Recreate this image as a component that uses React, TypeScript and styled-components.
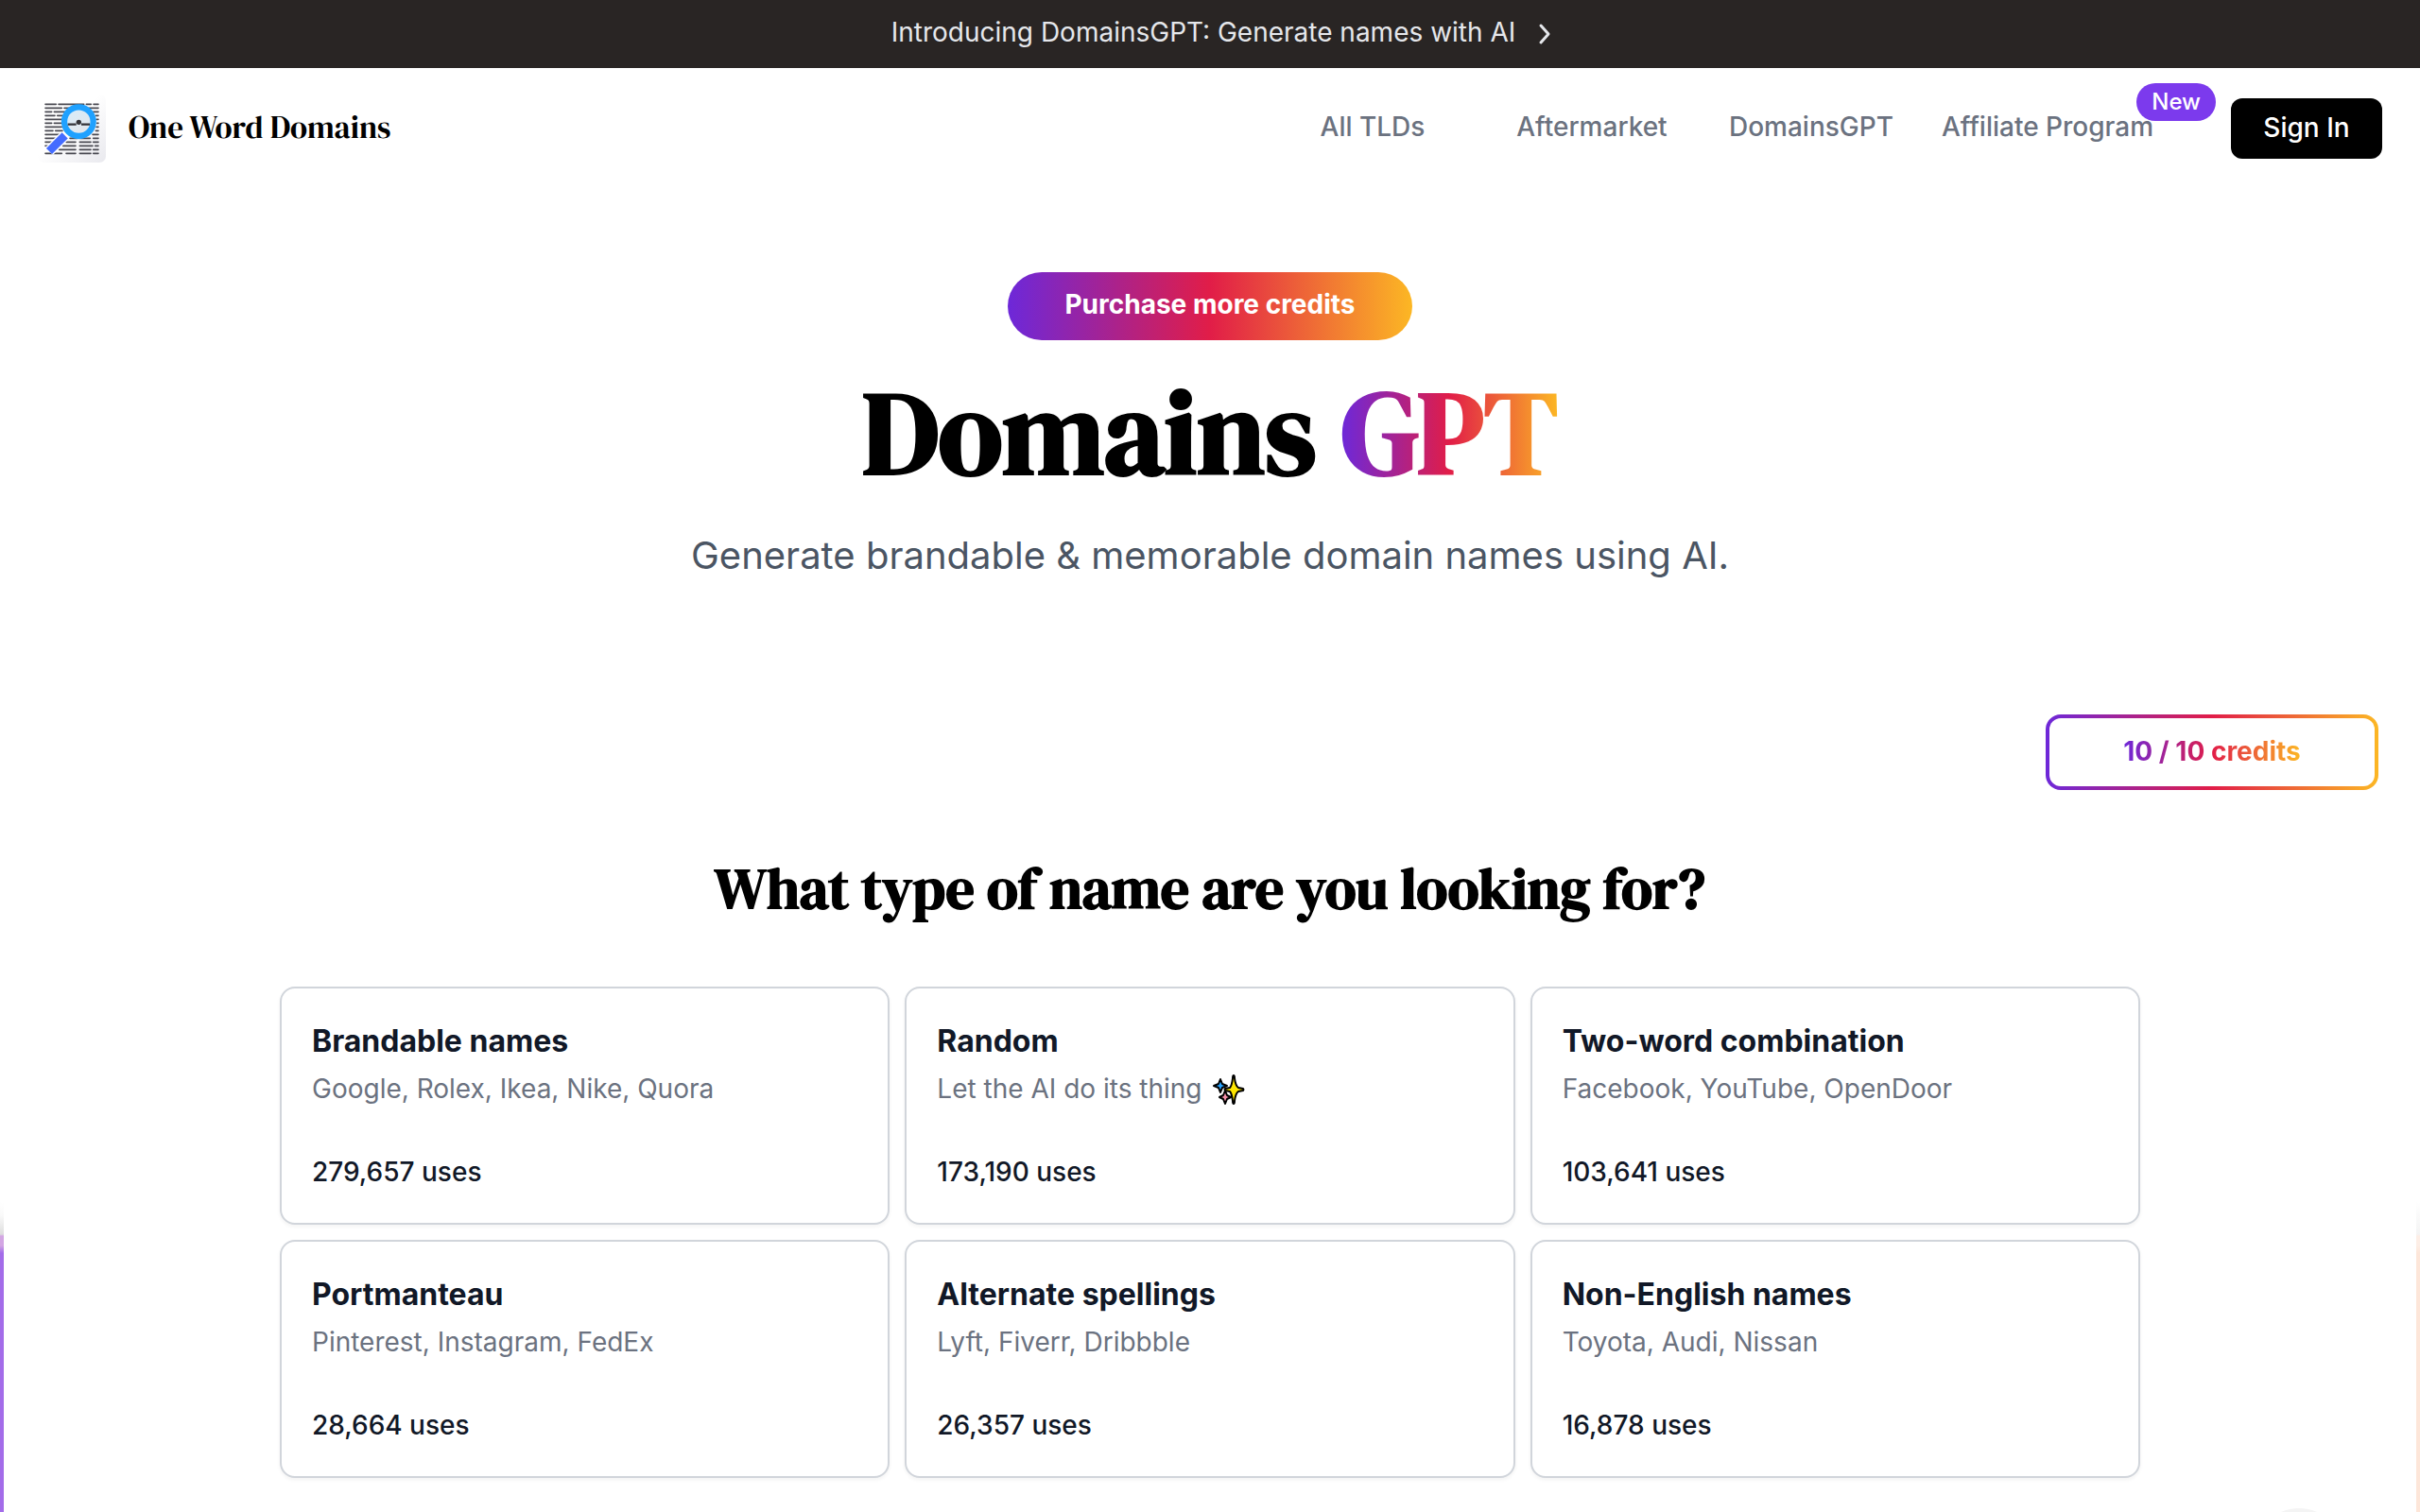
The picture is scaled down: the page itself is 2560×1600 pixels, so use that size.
import React from "react";
import styled, { createGlobalStyle } from "styled-components";

const sans = `Inter, "Liberation Sans", sans-serif`;
const serif = `"DM Serif Display", "Liberation Serif", serif`;
const rainbow = "linear-gradient(to right, #6d28d9, #e11d48, #fcb724)";

const GlobalStyle = createGlobalStyle`
  *, *::before, *::after { box-sizing: border-box; }
  body { margin: 0; background: #fff; font-family: ${sans}; color: #111827; overflow: hidden; }
  h1, h2, h3, p { margin: 0; }
  a { color: inherit; text-decoration: none; }
  button { border: 0; font-family: inherit; cursor: pointer; }
`;

const Announcement = styled.a`
  display: flex;
  align-items: center;
  justify-content: center;
  gap: 24px;
  height: 72px;
  padding: 0 0 4px 24px;
  background: #292524;
  && { color: #e5e7eb; }
  font-size: 28px;
  line-height: 40px;

  svg { margin-top: 4px; }
`;

const Header = styled.header`
  display: flex;
  align-items: center;
  justify-content: space-between;
  height: 128px;
  padding: 0 40px;
`;

const Brand = styled.a`
  display: flex;
  align-items: center;
  gap: 24px;
  && { color: #000; }
`;

const BrandName = styled.span`
  padding-bottom: 2px;
  font-family: ${serif};
  font-size: 33px;
  line-height: 48px;
  font-weight: 400;
`;

const Nav = styled.nav`
  display: flex;
  align-items: center;
`;

const NavLink = styled.a<{ $width: number }>`
  position: relative;
  width: ${(p) => p.$width}px;
  padding-bottom: 4px;
  text-align: center;
  && { color: #6b7280; }
  font-size: 28px;
  font-weight: 500;
  line-height: 40px;
  white-space: nowrap;
`;

const Badge = styled.span`
  position: absolute;
  right: -44px;
  bottom: 30px;
  padding: 0 16px;
  border-radius: 20px;
  background: #7c3aed;
  color: #fff;
  font-size: 24px;
  line-height: 40px;
`;

const SignIn = styled.button`
  width: 160px;
  height: 64px;
  margin-left: 60px;
  padding-bottom: 4px;
  border-radius: 12px;
  background: #000;
  color: #fff;
  font-size: 28px;
  font-weight: 500;
`;

const Hero = styled.section`
  display: flex;
  flex-direction: column;
  align-items: center;
  padding-top: 88px;
`;

const Purchase = styled.button`
  height: 72px;
  padding: 0 60px 4px;
  border-radius: 36px;
  background: ${rainbow};
  color: #fff;
  font-size: 28px;
  font-weight: 700;
`;

const Title = styled.h1`
  margin-top: 30px;
  font-family: ${serif};
  font-size: 124px;
  line-height: 136px;
  font-weight: 700;
  color: #000;
`;

const GradientText = styled.span`
  background: ${rainbow};
  background-clip: text;
  -webkit-background-clip: text;
  color: transparent;
`;

const Subtitle = styled.p`
  margin-top: 34px;
  font-size: 40px;
  line-height: 56px;
  color: #4b5563;
`;

const CreditsRow = styled.div`
  display: flex;
  justify-content: flex-end;
  margin-top: 140px;
  padding-right: 44px;
`;

const Credits = styled.button`
  width: 352px;
  height: 80px;
  padding-bottom: 4px;
  border: 4px solid transparent;
  border-radius: 16px;
  background: linear-gradient(#fff, #fff) padding-box, ${rainbow} border-box;
  font-size: 28px;
  font-weight: 700;
`;

const Types = styled.section`
  padding: 68px 296px 36px;
`;

const TypesHeading = styled.h2`
  font-family: ${serif};
  font-size: 60px;
  line-height: 72px;
  font-weight: 700;
  text-align: center;
  color: #000;
`;

const Grid = styled.div`
  display: grid;
  grid-template-columns: repeat(3, 1fr);
  gap: 16px;
  margin-top: 68px;
`;

const Card = styled.button`
  padding: 32px;
  border: 2px solid #d1d5db;
  border-radius: 16px;
  background: #fff;
  box-shadow: 0 2px 4px rgba(0, 0, 0, 0.05);
  text-align: left;
  color: #111827;
`;

const CardTitle = styled.h3`
  font-size: 32px;
  line-height: 48px;
  font-weight: 700;
`;

const CardExamples = styled.p`
  display: flex;
  align-items: center;
  gap: 10px;
  margin-top: 8px;
  font-size: 28px;
  line-height: 36px;
  color: #6b7280;
`;

const CardUses = styled.p`
  margin-top: 48px;
  font-size: 28px;
  line-height: 44px;
  font-weight: 500;
`;

const EdgeGlow = styled.div<{ $side: "left" | "right"; $fog: string; $tint: string; $color: string }>`
  position: fixed;
  ${(p) => p.$side}: 0;
  bottom: 0;
  width: 4px;
  height: 328px;
  background: linear-gradient(
    #fff,
    #fafafa 14px,
    ${(p) => p.$fog} 34px,
    ${(p) => p.$tint} 36px,
    ${(p) => p.$tint} 46px,
    ${(p) => p.$color} 54px
  );
`;

const ChatHalo = styled.div`
  position: fixed;
  right: 80px;
  bottom: -92px;
  width: 96px;
  height: 96px;
  border-radius: 50%;
  background: #f4f4f4;
`;

const lineRows: [number, number][][] = [
  [[22, 60], [64, 148], [152, 171], [175, 194]],
  [[22, 78], [82, 110], [160, 194]],
  [[22, 46], [50, 94], [174, 194]],
  [[22, 56], [60, 84], [182, 194]],
  [[22, 78], [184, 194]],
  [[22, 46], [50, 76], [186, 194]],
  [[22, 78], [184, 194]],
  [[22, 50], [54, 80], [182, 194]],
  [[22, 76], [172, 194]],
  [[22, 72], [100, 128], [132, 168], [174, 194]],
  [[22, 46], [88, 122], [131, 170], [174, 194]],
  [[22, 42], [78, 122], [131, 176], [180, 194]],
  [[66, 122], [131, 170], [174, 194]],
  [[22, 78], [88, 122], [131, 170], [174, 194]],
];

const Logo = () => (
  <svg width="72" height="72" viewBox="0 0 216 216" aria-hidden="true">
    <defs>
      <linearGradient id="paper" x1="0" y1="0" x2="1" y2="1">
        <stop offset="0.45" stopColor="#fff" />
        <stop offset="1" stopColor="#e9e9ee" />
      </linearGradient>
      <linearGradient id="lens" x1="0" y1="0" x2="0.6" y2="1">
        <stop offset="0" stopColor="#d5ecfc" />
        <stop offset="1" stopColor="#e4e6ea" />
      </linearGradient>
    </defs>
    <rect width="216" height="216" rx="20" fill="url(#paper)" />
    {lineRows.map((row, i) =>
      row.map(([a, b]) => (
        <path key={`${i}-${a}`} d={`M${a + 2} ${31 + i * 12}H${b - 2}`} stroke="#4a4a52" strokeWidth="5" strokeLinecap="round" />
      ))
    )}
    <path d="M86 130L36 180" stroke="#fff" strokeWidth="34" />
    <path d="M86 130L36 180" stroke="#446cff" strokeWidth="26" />
    <circle cx="130" cy="86" r="46" fill="url(#lens)" stroke="#1fa1ff" strokeWidth="19" />
    <path d="M95 95H122M138 95H165" stroke="#333338" strokeWidth="7" />
    <circle cx="130" cy="88" r="8" fill="#333338" />
  </svg>
);

const Chevron = () => (
  <svg width="14" height="24" viewBox="0 0 14 24" fill="none" aria-hidden="true">
    <path d="M3 3l8 9-8 9" stroke="currentColor" strokeWidth="3" strokeLinecap="round" strokeLinejoin="round" />
  </svg>
);

const Sparkles = () => (
  <svg width="36" height="36" viewBox="0 0 36 36" role="img" aria-label="sparkles" stroke="#000" strokeWidth="2" strokeLinejoin="round">
    <path d="M9 8l2 5 5 2-5 2-2 5-2-5-5-2 5-2z" fill="#29a3ff" />
    <path d="M14 20l2 5 4 2-4 2-2 5-2-5-4-2 4-2z" fill="#f48fa8" />
    <path d="M23 4q1 0 1 3q1 8 4 10l5 1q1 1 0 2l-5 1q-3 2-4 10q0 3-1 3q-1 0-1-3q-1-8-3-10l-5-1q-1-1 0-2l5-1q2-2 3-10q0-3 1-3z" fill="#ffe600" />
  </svg>
);

const types = [
  { title: "Brandable names", examples: "Google, Rolex, Ikea, Nike, Quora", uses: "279,657" },
  { title: "Random", examples: "Let the AI do its thing", uses: "173,190", sparkles: true },
  { title: "Two-word combination", examples: "Facebook, YouTube, OpenDoor", uses: "103,641" },
  { title: "Portmanteau", examples: "Pinterest, Instagram, FedEx", uses: "28,664" },
  { title: "Alternate spellings", examples: "Lyft, Fiverr, Dribbble", uses: "26,357" },
  { title: "Non-English names", examples: "Toyota, Audi, Nissan", uses: "16,878" },
];

export default function App() {
  return (
    <>
      <GlobalStyle />
      <Announcement href="#">
        Introducing DomainsGPT: Generate names with AI
        <Chevron />
      </Announcement>
      <Header>
        <Brand href="#">
          <Logo />
          <BrandName>One Word Domains</BrandName>
        </Brand>
        <Nav>
          <NavLink href="#" $width={232}>All TLDs</NavLink>
          <NavLink href="#" $width={232}>Aftermarket</NavLink>
          <NavLink href="#" $width={232}>DomainsGPT</NavLink>
          <NavLink href="#" $width={268}>
            Affiliate Program
            <Badge>New</Badge>
          </NavLink>
          <SignIn type="button">Sign In</SignIn>
        </Nav>
      </Header>
      <main>
        <Hero>
          <Purchase type="button">Purchase more credits</Purchase>
          <Title>
            Domains <GradientText>GPT</GradientText>
          </Title>
          <Subtitle>Generate brandable &amp; memorable domain names using AI.</Subtitle>
        </Hero>
        <CreditsRow>
          <Credits type="button">
            <GradientText>10 / 10 credits</GradientText>
          </Credits>
        </CreditsRow>
        <Types>
          <TypesHeading>What type of name are you looking for?</TypesHeading>
          <Grid>
            {types.map((t) => (
              <Card key={t.title} type="button">
                <CardTitle>{t.title}</CardTitle>
                <CardExamples>
                  {t.examples}
                  {t.sparkles && <Sparkles />}
                </CardExamples>
                <CardUses>{t.uses} uses</CardUses>
              </Card>
            ))}
          </Grid>
        </Types>
      </main>
      <EdgeGlow $side="left" $fog="#dedede" $tint="#d3a6e3" $color="#a36ce9" />
      <EdgeGlow $side="right" $fog="#f4f4f4" $tint="#fdeee6" $color="#fde6d9" />
      <ChatHalo />
    </>
  );
}
